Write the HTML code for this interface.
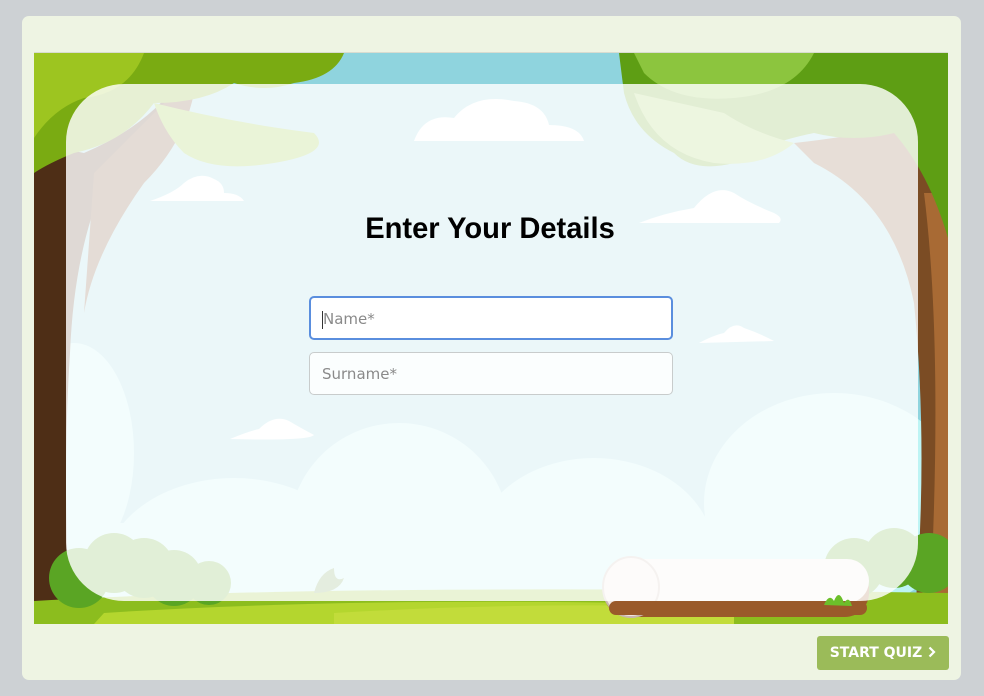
<!DOCTYPE html>
<html><head><meta charset="utf-8"><style>
html,body{margin:0;padding:0;width:984px;height:696px;background:#cdd1d4;overflow:hidden;font-family:"Liberation Sans",sans-serif}
.card{position:absolute;left:22px;top:16px;width:939px;height:664px;background:#eef4e3;border-radius:7px}
.scene{position:absolute;left:34px;top:52px;width:914px;height:571px;overflow:hidden;border-top:1px solid #d8dcd0}
h1{position:absolute;left:0;width:980px;top:212px;margin:0;text-align:center;font-size:30px;font-weight:bold;color:#000;transform:scaleX(0.97)}
.inp{position:absolute;left:309px;width:364px;height:44px;box-sizing:border-box;border-radius:5px;font-size:15px;color:#8a8a8a;padding-left:12px;line-height:42px;font-family:"DejaVu Sans","Liberation Sans",sans-serif}
.i1{top:296px;background:#fff;border:2px solid #5a8ede;padding-left:11px}
.i2{top:352px;background:#fbfefe;border:1px solid #c8cccc;height:43px}
.cur{display:inline-block;width:1px;height:18px;background:#333;vertical-align:middle}
.btn{position:absolute;left:817px;top:636px;width:132px;height:34px;background:#9bbb59;border-radius:3px;color:#fff;font-weight:bold;font-size:14px;line-height:34px;text-align:center;font-family:"DejaVu Sans","Liberation Sans",sans-serif}
.btn svg{vertical-align:-1px;margin-left:6px}
</style></head><body>
<div class="card"></div>
<div class="scene">
<svg width="914" height="571" viewBox="0 0 914 571" xmlns="http://www.w3.org/2000/svg">
<rect width="914" height="571" fill="#8fd4de"/>
<g fill="#bdf4f4">
<ellipse cx="40" cy="400" rx="60" ry="110"/>
<ellipse cx="200" cy="520" rx="130" ry="95"/><ellipse cx="365" cy="480" rx="110" ry="110"/>
<ellipse cx="560" cy="500" rx="120" ry="95"/><ellipse cx="800" cy="450" rx="130" ry="110"/>
<rect x="60" y="470" width="800" height="80"/>
</g>
<g fill="#fff">
<path d="M380 88 Q390 60 420 65 Q440 40 480 48 Q510 50 515 72 Q545 72 550 88Z"/>
<path d="M116 148 Q140 140 150 130 Q165 118 180 126 Q190 130 190 140 Q205 140 210 148Z"/>
<path d="M605 170 Q630 160 660 155 Q680 130 700 140 Q715 150 740 160 Q750 165 745 170Z"/>
<path d="M665 290 Q680 282 690 280 Q700 268 710 275 Q725 280 740 288Z"/>
<path d="M196 386 Q215 378 225 376 Q240 361 255 368 Q265 374 280 382 Q275 388 196 386Z"/>
</g>
<path d="M0 90 L0 571 L36 571 Q28 420 36 300 Q40 200 70 130 Q130 90 160 30 L150 20 Q120 70 50 100Z" fill="#4e2e16"/>
<path d="M60 120 Q100 80 140 40 L160 40 Q150 90 110 130 Q60 200 50 260Z" fill="#6b3e1e"/>
<path d="M0 0 H310 Q300 25 260 30 Q230 40 200 30 Q170 50 120 50 Q90 90 40 100 Q15 110 0 120Z" fill="#7aab12"/>
<path d="M0 0 H110 Q95 40 50 45 Q20 55 0 85Z" fill="#9dc520"/>
<path d="M120 50 Q200 70 280 80 Q300 100 240 110 Q180 120 150 100 Q130 80 120 50Z" fill="#8dbf2a"/>
<path d="M914 60 L914 571 L880 571 Q895 400 880 250 Q860 150 780 110 L760 90 Q850 80 914 60Z" fill="#7b4c24"/>
<path d="M890 140 Q910 300 895 571 L914 571 V140Z" fill="#a86a34"/>
<path d="M585 0 H914 V185 Q895 120 860 80 Q820 90 780 80 Q730 90 700 110 Q660 120 640 100 Q600 80 590 40Z" fill="#5e9e14"/>
<path d="M600 0 H780 Q760 40 700 45 Q640 50 610 20Z" fill="#8cc53e"/>
<path d="M600 40 Q620 100 680 110 Q730 115 760 90 Q720 80 690 60Z" fill="#9ccb56"/>
<path d="M0 548 Q300 530 914 540 V571 H0Z" fill="#8cbd1e"/>
<path d="M70 560 Q300 545 600 550 L600 571 H60Z" fill="#b4d62e"/>
<path d="M300 560 Q500 548 700 555 L700 571 H300Z" fill="#c2dc3a"/>
<g fill="#5aa524">
<circle cx="45" cy="525" r="30"/><circle cx="80" cy="510" r="30"/><circle cx="110" cy="515" r="30"/>
<circle cx="140" cy="525" r="28"/><circle cx="175" cy="530" r="22"/>
<circle cx="820" cy="515" r="30"/><circle cx="860" cy="505" r="30"/><circle cx="895" cy="510" r="30"/>
</g>
<path d="M280 540 Q285 520 300 515 Q300 530 310 525 Q305 540 280 540Z" fill="#6c9a50"/>
<rect x="570" y="512" width="265" height="52" rx="24" fill="#9a5a2a"/>
<rect x="570" y="506" width="265" height="44" rx="22" fill="#f4ebe6"/>
<ellipse cx="597" cy="534" rx="28" ry="30" fill="#f3e8e2" stroke="#c9b7ad" stroke-width="2"/>
<rect x="32" y="31" width="852" height="517" rx="58" fill="#ffffff" fill-opacity="0.82"/>
<rect x="575" y="548" width="258" height="14" rx="7" fill="#9a5a2a"/>
<path d="M790 552 Q795 540 800 548 Q805 535 810 550 Q815 542 818 553Z" fill="#6cbf2a"/>
</svg>
</div>
<h1>Enter Your Details</h1>
<div class="inp i1"><span class="cur"></span>Name*</div>
<div class="inp i2">Surname*</div>
<div class="btn">START QUIZ<svg width="8" height="12" viewBox="0 0 8 12"><path d="M1.5 1.5 L6 6 L1.5 10.5" stroke="#fff" stroke-width="2.2" fill="none"/></svg></div>
</body></html>
